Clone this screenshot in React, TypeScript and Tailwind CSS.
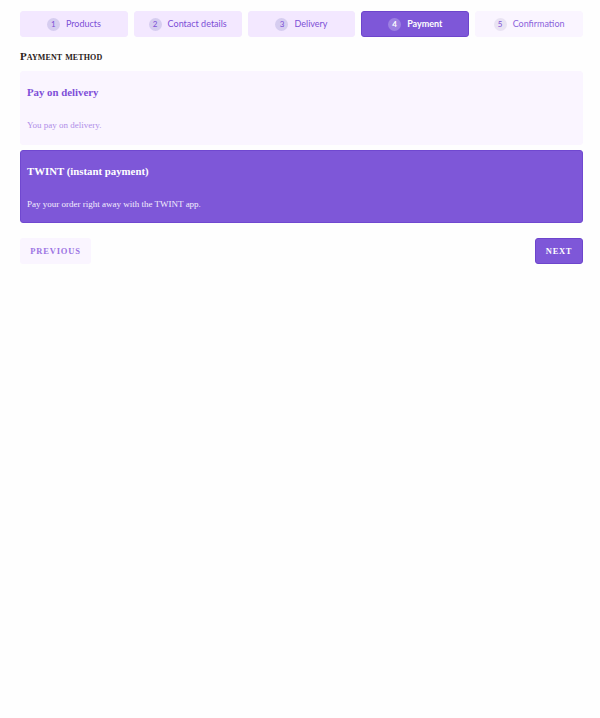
const steps = [
  { n: 1, label: 'Products', state: 'done' },
  { n: 2, label: 'Contact details', state: 'done' },
  { n: 3, label: 'Delivery', state: 'done' },
  { n: 4, label: 'Payment', state: 'active' },
  { n: 5, label: 'Confirmation', state: 'todo' },
]

const methods = [
  { title: 'Pay on delivery', text: 'You pay on delivery.', selected: false },
  { title: 'TWINT (instant payment)', text: 'Pay your order right away with the TWINT app.', selected: true },
]

export default function App() {
  return (
    <div className="min-h-screen bg-[#fefefe] pl-[20px] pr-[17px] pt-[11px] font-['Lato',sans-serif]">
      <div className="grid grid-cols-5 gap-[6px]">
        {steps.map((s) => (
          <div
            key={s.n}
            className={
              'h-[26px] rounded-[3px] flex items-center justify-center gap-[6px] text-[9px] border ' +
              (s.state === 'active'
                ? 'bg-[#7e57d8] border-[#6d45cc] text-white font-bold'
                : s.state === 'done'
                ? 'bg-[#f3e8ff] border-[#f3e8ff] text-[#7c4fd6]'
                : 'bg-[#faf5ff] border-[#faf5ff] text-[#8b63dc]')
            }
          >
            <span
              className={
                'w-[13px] h-[13px] rounded-full flex items-center justify-center text-[8px] ' +
                (s.state === 'active'
                  ? 'bg-[#9d80e2] text-white'
                  : s.state === 'done'
                  ? 'bg-[#d6cdf0] text-[#7c4fd6]'
                  : 'bg-[#e9e3f3] text-[#7c4fd6]')
              }
            >
              {s.n}
            </span>
            {s.label}
          </div>
        ))}
      </div>

      <h2 className="mt-[14px] text-[11px] font-bold text-[#2a2118] [font-variant:small-caps] tracking-[0.01em] font-['Liberation_Serif',serif] leading-none">
        Payment method
      </h2>

      <div className="mt-[9px] flex flex-col gap-[5px] font-['Liberation_Serif',serif]">
        {methods.map((m) => (
          <div
            key={m.title}
            className={
              'rounded-[3px] px-[6px] pt-[13px] border ' +
              (m.selected ? 'bg-[#7e57d8] border-[#7048d0] pb-[12px]' : 'bg-[#faf5ff] border-[#faf5ff] pb-[13px]')
            }
          >
            <div className={'text-[10.8px] font-bold leading-[14px] ' + (m.selected ? 'text-white' : 'text-[#7e4fd8]')}>
              {m.title}
            </div>
            <div className={'mt-[20px] text-[9px] leading-[12px] ' + (m.selected ? 'text-[#f3eefd]' : 'text-[#b08ee8]')}>
              {m.text}
            </div>
          </div>
        ))}
      </div>

      <div className="mt-[15px] flex justify-between font-['Liberation_Serif',serif]">
        <button className="h-[26px] w-[71px] rounded-[3px] bg-[#faf5ff] text-[#9c74e3] text-[8.5px] font-bold tracking-[0.1em]">
          PREVIOUS
        </button>
        <button className="h-[26px] w-[48px] rounded-[3px] bg-[#7e57d8] border border-[#6d45cc] text-white text-[8.5px] font-bold tracking-[0.08em]">
          NEXT
        </button>
      </div>
    </div>
  )
}
